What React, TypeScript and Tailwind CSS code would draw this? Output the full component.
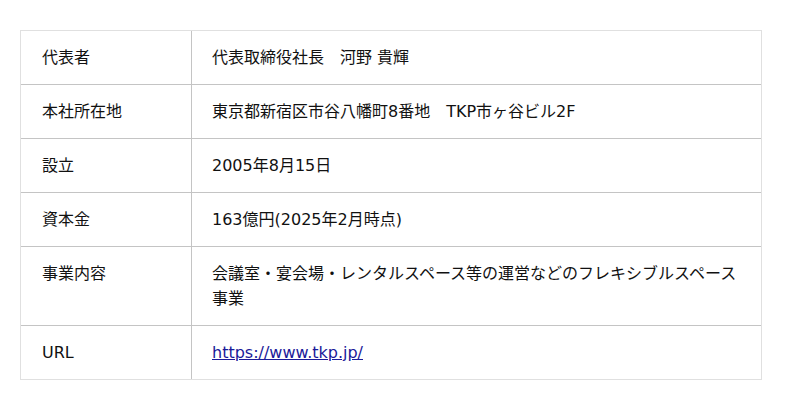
const rows: { label: string; value: React.ReactNode }[] = [
  { label: "代表者", value: "代表取締役社長　河野 貴輝" },
  { label: "本社所在地", value: "東京都新宿区市谷八幡町8番地　TKP市ヶ谷ビル2F" },
  { label: "設立", value: "2005年8月15日" },
  { label: "資本金", value: "163億円(2025年2月時点)" },
  { label: "事業内容", value: "会議室・宴会場・レンタルスペース等の運営などのフレキシブルスペース事業" },
  {
    label: "URL",
    value: (
      <a href="#" className="text-[#1a1a99] underline">
        https://www.tkp.jp/
      </a>
    ),
  },
];

export default function App() {
  return (
    <div className="bg-white w-[800px] h-[410px] pt-[30px] pl-[20px] font-['DejaVu_Sans','Noto_Sans_CJK_JP',sans-serif] text-[16px] leading-[25px] text-[#111]">
      <div className="w-[742px] border border-[#e0e0e0]">
        {rows.map((row, i) => (
          <div key={row.label} className={`flex ${i > 0 ? "border-t border-[#c4c4c4]" : ""}`}>
            <div className="w-[171px] shrink-0 border-r border-[#c4c4c4] pl-[21px] py-[14px]">{row.label}</div>
            <div className="flex-1 pl-[20px] pr-[20px] py-[14px]">{row.value}</div>
          </div>
        ))}
      </div>
    </div>
  );
}
